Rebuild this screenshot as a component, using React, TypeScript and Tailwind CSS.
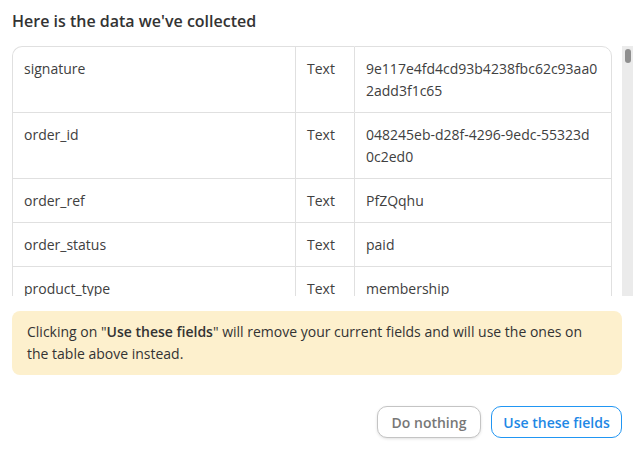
import React from "react";

const rows: { name: string; type: string; value: string[] }[] = [
  { name: "signature", type: "Text", value: ["9e117e4fd4cd93b4238fbc62c93aa0", "2add3f1c65"] },
  { name: "order_id", type: "Text", value: ["048245eb-d28f-4296-9edc-55323d", "0c2ed0"] },
  { name: "order_ref", type: "Text", value: ["PfZQqhu"] },
  { name: "order_status", type: "Text", value: ["paid"] },
  { name: "product_type", type: "Text", value: ["membership"] },
  { name: "product_id", type: "Text", value: ["12345"] },
];

export default function App() {
  return (
    <div
      className="w-[635px] h-[457px] bg-white text-[#404040] overflow-hidden"
      style={{ fontFamily: '"Open Sans", "Noto Sans", sans-serif' }}
    >
      <div className="pl-[12px] pr-[13px] pt-[9px]">
        <h1 className="text-[16px] leading-[24px] font-semibold text-[#333333]">
          Here is the data we've collected
        </h1>
        <div className="mt-[13px] flex h-[250px] w-[621px] gap-[10px]">
          <div className="w-[600px] shrink-0 overflow-hidden">
            <table className="w-full table-fixed border-separate border-spacing-0 text-[14px] leading-[22px]">
              <colgroup>
                <col className="w-[283px]" />
                <col className="w-[59px]" />
                <col />
              </colgroup>
              <tbody>
                {rows.map((r, i) => (
                  <tr key={r.name}>
                    <td
                      className={`border-l border-b border-[#e0e0e0] px-[11px] pt-[11px] pb-[10px] align-top ${
                        i === 0 ? "border-t rounded-tl-[10px]" : ""
                      }`}
                    >
                      {r.name}
                    </td>
                    <td
                      className={`border-l border-b border-[#e0e0e0] px-[11px] pt-[11px] pb-[10px] align-top ${
                        i === 0 ? "border-t" : ""
                      }`}
                    >
                      {r.type}
                    </td>
                    <td
                      className={`border-l border-r border-b border-[#e0e0e0] pl-[11px] pr-[4px] pt-[11px] pb-[10px] align-top whitespace-nowrap ${
                        i === 0 ? "border-t rounded-tr-[10px]" : ""
                      }`}
                    >
                      {r.value.map((line) => (
                        <span key={line} className="block">
                          {line}
                        </span>
                      ))}
                    </td>
                  </tr>
                ))}
              </tbody>
            </table>
          </div>
          <div className="w-[11px] shrink-0 h-full bg-[#ebebeb] pt-[3px] flex justify-center">
            <div className="w-[6px] h-[14px] rounded-full bg-[#8f8f8f]" />
          </div>
        </div>
        <div className="mt-[15px] w-[610px] rounded-[8px] bg-[#fdf0cd] pl-[15px] pr-[24px] pt-[10px] pb-[10px] text-[14px] leading-[22px] text-[#333333]">
          Clicking on "<span className="font-semibold">Use these fields</span>" will remove your current fields and will use the ones on the table above instead.
        </div>
        <div className="mt-[31px] flex justify-end gap-[10px] w-[610px]">
          <button className="h-[32px] w-[104px] rounded-[10px] border border-[#c4c4c4] bg-white text-[14px] font-semibold text-[#777777] shadow-[0_1px_3px_rgba(0,0,0,0.12)]">
            Do nothing
          </button>
          <button className="h-[32px] w-[131px] rounded-[10px] border border-[#2196f3] bg-white text-[14px] font-semibold text-[#1e88e5]">
            Use these fields
          </button>
        </div>
      </div>
    </div>
  );
}
